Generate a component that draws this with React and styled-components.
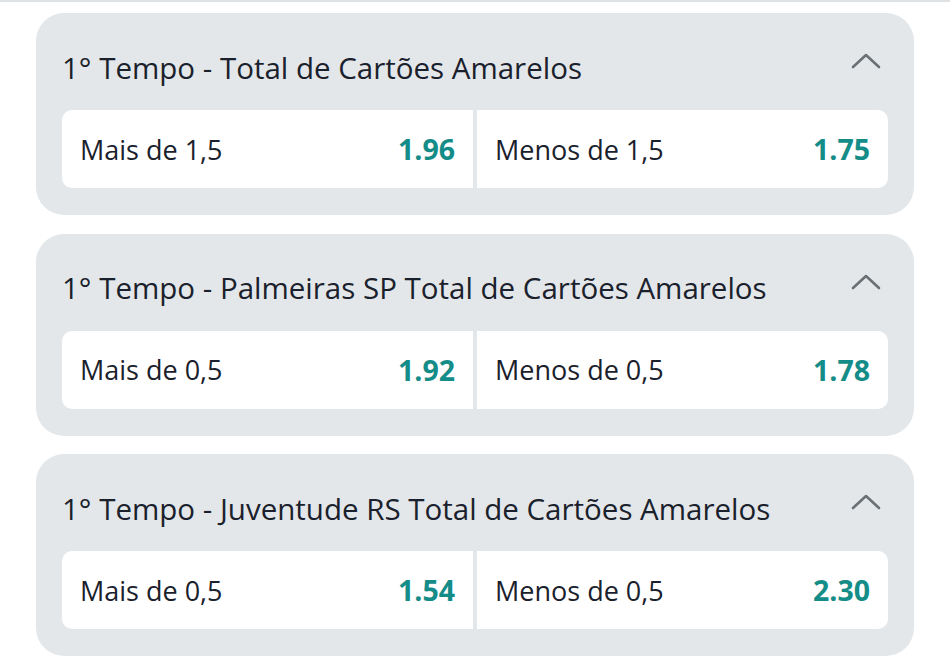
import React from 'react';
import styled, { createGlobalStyle } from 'styled-components';

const GlobalStyle = createGlobalStyle`
  body {
    margin: 0;
    background: #ffffff;
    font-family: "Open Sans", "Noto Sans", sans-serif;
  }
`;

const Page = styled.div`
  border-top: 2px solid #dfe2e5;
  padding: 11px 36px 0 36px;
  display: flex;
  flex-direction: column;
  gap: 18.5px;
`;

const Card = styled.section`
  background: #e3e7ea;
  border-radius: 28px;
  padding: 0 26px 27px 26px;
`;

const Header = styled.div`
  height: 97px;
  box-sizing: border-box;
  padding-top: 11px;
  display: flex;
  align-items: center;
  justify-content: space-between;
`;

const Title = styled.h2`
  margin: 0;
  font-size: 29.5px;
  font-weight: 400;
  color: #1a212c;
`;

const Chevron = styled.svg`
  width: 30px;
  height: 16px;
  margin-right: 7px;
  margin-top: -12px;
`;

const Row = styled.div`
  display: grid;
  grid-template-columns: 1fr 1fr;
  gap: 4px;
  border-radius: 10px;
  overflow: hidden;
`;

const Cell = styled.div`
  background: #ffffff;
  height: 78px;
  display: flex;
  align-items: center;
  justify-content: space-between;
  padding: 0 18px 0 18px;
`;

const Label = styled.span`
  font-size: 27px;
  color: #1a212c;
`;

const Odd = styled.span`
  font-size: 28.5px;
  font-weight: 700;
  color: #148c87;
`;

const markets = [
  {
    title: '1° Tempo - Total de Cartões Amarelos',
    options: [['Mais de 1,5', '1.96'], ['Menos de 1,5', '1.75']],
  },
  {
    title: '1° Tempo - Palmeiras SP Total de Cartões Amarelos',
    options: [['Mais de 0,5', '1.92'], ['Menos de 0,5', '1.78']],
  },
  {
    title: '1° Tempo - Juventude RS Total de Cartões Amarelos',
    options: [['Mais de 0,5', '1.54'], ['Menos de 0,5', '2.30']],
  },
];

const App = () => {
  return (
    <>
      <GlobalStyle />
      <Page>
        {markets.map((m) => (
          <Card key={m.title}>
            <Header>
              <Title>{m.title}</Title>
              <Chevron viewBox="0 0 30 16">
                <path d="M2 14 L15 2 L28 14" fill="none" stroke="#6b7075" strokeWidth="2.6" strokeLinecap="round" strokeLinejoin="round" />
              </Chevron>
            </Header>
            <Row>
              {m.options.map(([label, odd]) => (
                <Cell key={label}>
                  <Label>{label}</Label>
                  <Odd>{odd}</Odd>
                </Cell>
              ))}
            </Row>
          </Card>
        ))}
      </Page>
    </>
  );
};

export default App;
